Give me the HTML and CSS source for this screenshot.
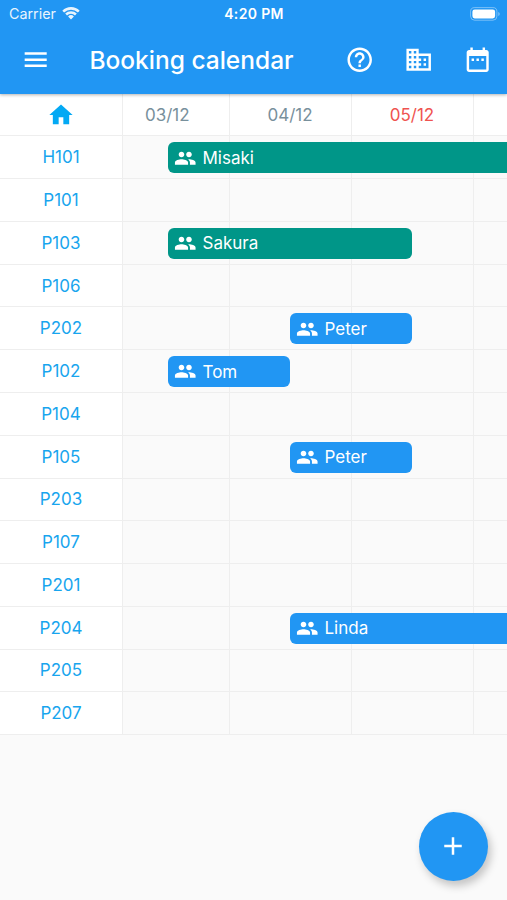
FILE: index.html
```html
<!DOCTYPE html>
<html lang="en">
<head>
<meta charset="utf-8">
<title>Booking calendar</title>
<link rel="stylesheet" href="styles.css">
</head>
<body>
<svg class="defs" aria-hidden="true">
  <symbol id="people" viewBox="0 0 24 24"><path d="M16 11c1.66 0 2.99-1.34 2.99-3S17.66 5 16 5s-3 1.34-3 3 1.34 3 3 3zm-8 0c1.66 0 2.99-1.34 2.99-3S9.66 5 8 5 5 6.34 5 8s1.34 3 3 3zm0 2c-2.33 0-7 1.17-7 3.5V19h14v-2.5C15 14.17 10.33 13 8 13zm8 0c-.29 0-.62.02-.97.05 1.16.84 1.97 1.97 1.97 3.45V19h6v-2.500C23 14.170 18.330 13 16 13z"/></symbol>
</svg>
<div class="app">
  <header class="top">
    <div class="status">
      <div class="carrier"><span class="carrier-name">Carrier</span>
        <svg class="wifi" viewBox="0 0 18 14"><path d="M0.300 4.700A12.300 12.300 0 0 1 17.700 4.700L15.900 6.500A9.800 9.800 0 0 0 2.100 6.500ZM3.200 7.600A8.200 8.200 0 0 1 14.800 7.600L13 9.400A5.700 5.700 0 0 0 5 9.400ZM6.100 10.500A4.100 4.100 0 0 1 11.900 10.500L9 13.500Z"/></svg>
      </div>
      <span class="time">4:20 PM</span>
      <svg class="battery" viewBox="0 0 30 14"><rect x=".6" y=".6" width="26.300" height="12.600" rx="4" fill="none" stroke="#fff" stroke-opacity=".4"/><rect x="2.400" y="2.400" width="22.700" height="9" rx="2.300"/><path d="M28.300 5v4q1.400-.6 1.400-2T28.300 5z" opacity=".45"/></svg>
    </div>
    <nav class="bar">
      <svg class="icon" viewBox="0 0 24 24"><path d="M3 18h18v-2H3v2zm0-5h18v-2H3v2zm0-7v2h18V6H3z"/></svg>
      <h1 class="title">Booking calendar</h1>
      <div class="actions">
        <svg class="icon" viewBox="0 0 24 24"><path d="M11 18h2v-2h-2v2zm1-16C6.480 2 2 6.480 2 12s4.480 10 10 10 10-4.480 10-10S17.520 2 12 2zm0 18c-4.410 0-8-3.590-8-8s3.590-8 8-8 8 3.590 8 8-3.590 8-8 8zm0-14c-2.210 0-4 1.790-4 4h2c0-1.100.9-2 2-2s2 .9 2 2c0 2-3 1.750-3 5h2c0-2.250 3-2.500 3-5 0-2.210-1.790-4-4-4z"/></svg>
        <svg class="icon" viewBox="0 0 24 24"><path d="M12 7V3H2v18h20V7H12zM6 19H4v-2h2v2zm0-4H4v-2h2v2zm0-4H4V9h2v2zm0-4H4V5h2v2zm4 12H8v-2h2v2zm0-4H8v-2h2v2zm0-4H8V9h2v2zm0-4H8V5h2v2zm10 12h-8v-2h2v-2h-2v-2h2v-2h-2V9h8v10zm-2-8h-2v2h2v-2zm0 4h-2v2h2v-2z"/></svg>
        <svg class="icon" viewBox="0 0 24 24"><path d="M9 11H7v2h2v-2zm4 0h-2v2h2v-2zm4 0h-2v2h2v-2zm2-7h-1V2h-2v2H8V2H6v2H5c-1.100 0-2 .9-2 2v14c0 1.100.9 2 2 2h14c1.100 0 2-.9 2-2V6c0-1.100-.9-2-2-2zm0 16H5V9h14v11z"/></svg>
      </div>
    </nav>
  </header>
  <main class="calendar">
    <div class="row head">
      <div class="room"><svg class="home" viewBox="0 0 24 24"><path d="M10 20v-6h4v6h5v-8h3L12 3 2 12h3v8z"/></svg></div>
      <div class="day first">03/12</div><div class="day">04/12</div><div class="day today">05/12</div><div class="day"></div>
    </div>
    <div class="row"><div class="room">H101</div><i></i><i></i><i></i><i></i><div class="booking green from-3 open"><svg><use href="#people"/></svg>Misaki</div></div>
    <div class="row"><div class="room">P101</div><i></i><i></i><i></i><i></i></div>
    <div class="row"><div class="room">P103</div><i></i><i></i><i></i><i></i><div class="booking green from-3 two"><svg><use href="#people"/></svg>Sakura</div></div>
    <div class="row"><div class="room">P106</div><i></i><i></i><i></i><i></i></div>
    <div class="row"><div class="room">P202</div><i></i><i></i><i></i><i></i><div class="booking from-4"><svg><use href="#people"/></svg>Peter</div></div>
    <div class="row"><div class="room">P102</div><i></i><i></i><i></i><i></i><div class="booking from-3"><svg><use href="#people"/></svg>Tom</div></div>
    <div class="row"><div class="room">P104</div><i></i><i></i><i></i><i></i></div>
    <div class="row"><div class="room">P105</div><i></i><i></i><i></i><i></i><div class="booking from-4"><svg><use href="#people"/></svg>Peter</div></div>
    <div class="row"><div class="room">P203</div><i></i><i></i><i></i><i></i></div>
    <div class="row"><div class="room">P107</div><i></i><i></i><i></i><i></i></div>
    <div class="row"><div class="room">P201</div><i></i><i></i><i></i><i></i></div>
    <div class="row"><div class="room">P204</div><i></i><i></i><i></i><i></i><div class="booking from-4 open"><svg><use href="#people"/></svg>Linda</div></div>
    <div class="row"><div class="room">P205</div><i></i><i></i><i></i><i></i></div>
    <div class="row"><div class="room">P207</div><i></i><i></i><i></i><i></i></div>
  </main>
  <button class="fab" aria-label="Add booking"><svg class="icon" viewBox="0 0 24 24"><path d="M19 13h-6v6h-2v-6H5v-2h6V5h2v6h6v2z"/></svg></button>
</div>
</body>
</html>
```
FILE: styles.css
```css
* { box-sizing: border-box; }
body { margin: 0; background: #fafafa; font-family: Inter, "Liberation Sans", sans-serif; }
svg { fill: currentColor; display: block; flex: none; }
.defs { position: absolute; width: 0; height: 0; }
.app { height: 900px; overflow: hidden; position: relative; }
.top {
  height: 94px;
  background: #2196f3;
  color: #fff;
  position: relative;
  z-index: 2;
  box-shadow: 0 1px 3px rgba(0, 0, 0, .3);
}
.status {
  height: 27px;
  display: grid;
  grid-template-columns: 1fr auto 1fr;
  align-items: center;
  padding: 0 7px 0 9px;
}
.carrier { display: flex; align-items: center; gap: 6px; opacity: .9; }
.carrier-name { font-size: 14.300px; }
.wifi { width: 18px; height: 14px; margin-top: -2px; }
.time { font-size: 14px; font-weight: 600; letter-spacing: .35px; margin-left: -1px; }
.battery { width: 30px; height: 14px; justify-self: end; }
.bar { height: 66px; display: flex; align-items: center; padding: 0 15px 0 20.500px; }
.icon { width: 29.400px; height: 29.400px; }
.title { margin: -1px 0 0 39.500px; font-size: 24.500px; font-weight: 500; line-height: 30px; white-space: nowrap; }
.actions { display: flex; gap: 29.400px; margin-left: auto; }
.row {
  display: grid;
  grid-template-columns: 123px 106.500px 122px 122px minmax(0, 1fr);
  grid-template-rows: 100%;
  height: 42.780px;
  color: #18a5ee;
  font-size: 17px;
}
.row > i, .room, .day {
  grid-row: 1;
  border-right: 1px solid #eee;
  border-bottom: 1px solid #eee;
}
.row > :nth-child(1) { grid-column: 1; }
.row > :nth-child(2) { grid-column: 2; }
.row > :nth-child(3) { grid-column: 3; }
.row > :nth-child(4) { grid-column: 4; }
.row > :nth-child(5) { grid-column: 5; border-right: 0; }
.room { background: #fff; display: flex; align-items: center; justify-content: center; }
.head { height: 42.400px; background: #fff; }
.home { width: 28px; height: 28px; color: #03a9f4; }
.day { display: flex; align-items: center; justify-content: center; color: #78909c; }
.first { padding-right: 17px; }
.today { color: #ef5350; }
.booking {
  grid-row: 1;
  grid-column: 2 / -1;
  align-self: center;
  display: flex;
  align-items: center;
  gap: 6px;
  width: 121.500px;
  height: 31px;
  padding-left: 6px;
  border-radius: 6px;
  background: #2196f3;
  color: #fff;
  z-index: 1;
}
.booking svg { width: 22.500px; height: 22.500px; }
.green { background: #009688; }
.from-3 { margin-left: 45px; }
.from-4 { margin-left: 167px; }
.two { width: 243.500px; }
.open { width: auto; border-radius: 6px 0 0 6px; }
.fab {
  position: absolute;
  left: 418.500px;
  top: 811.500px;
  width: 69px;
  height: 69px;
  padding: 0;
  border: 0;
  border-radius: 50%;
  display: flex;
  align-items: center;
  justify-content: center;
  background: #2196f3;
  color: #fff;
  box-shadow: 3px 5px 8px rgba(0, 0, 0, .22);
}
.fab .icon { width: 30px; height: 30px; }
```
